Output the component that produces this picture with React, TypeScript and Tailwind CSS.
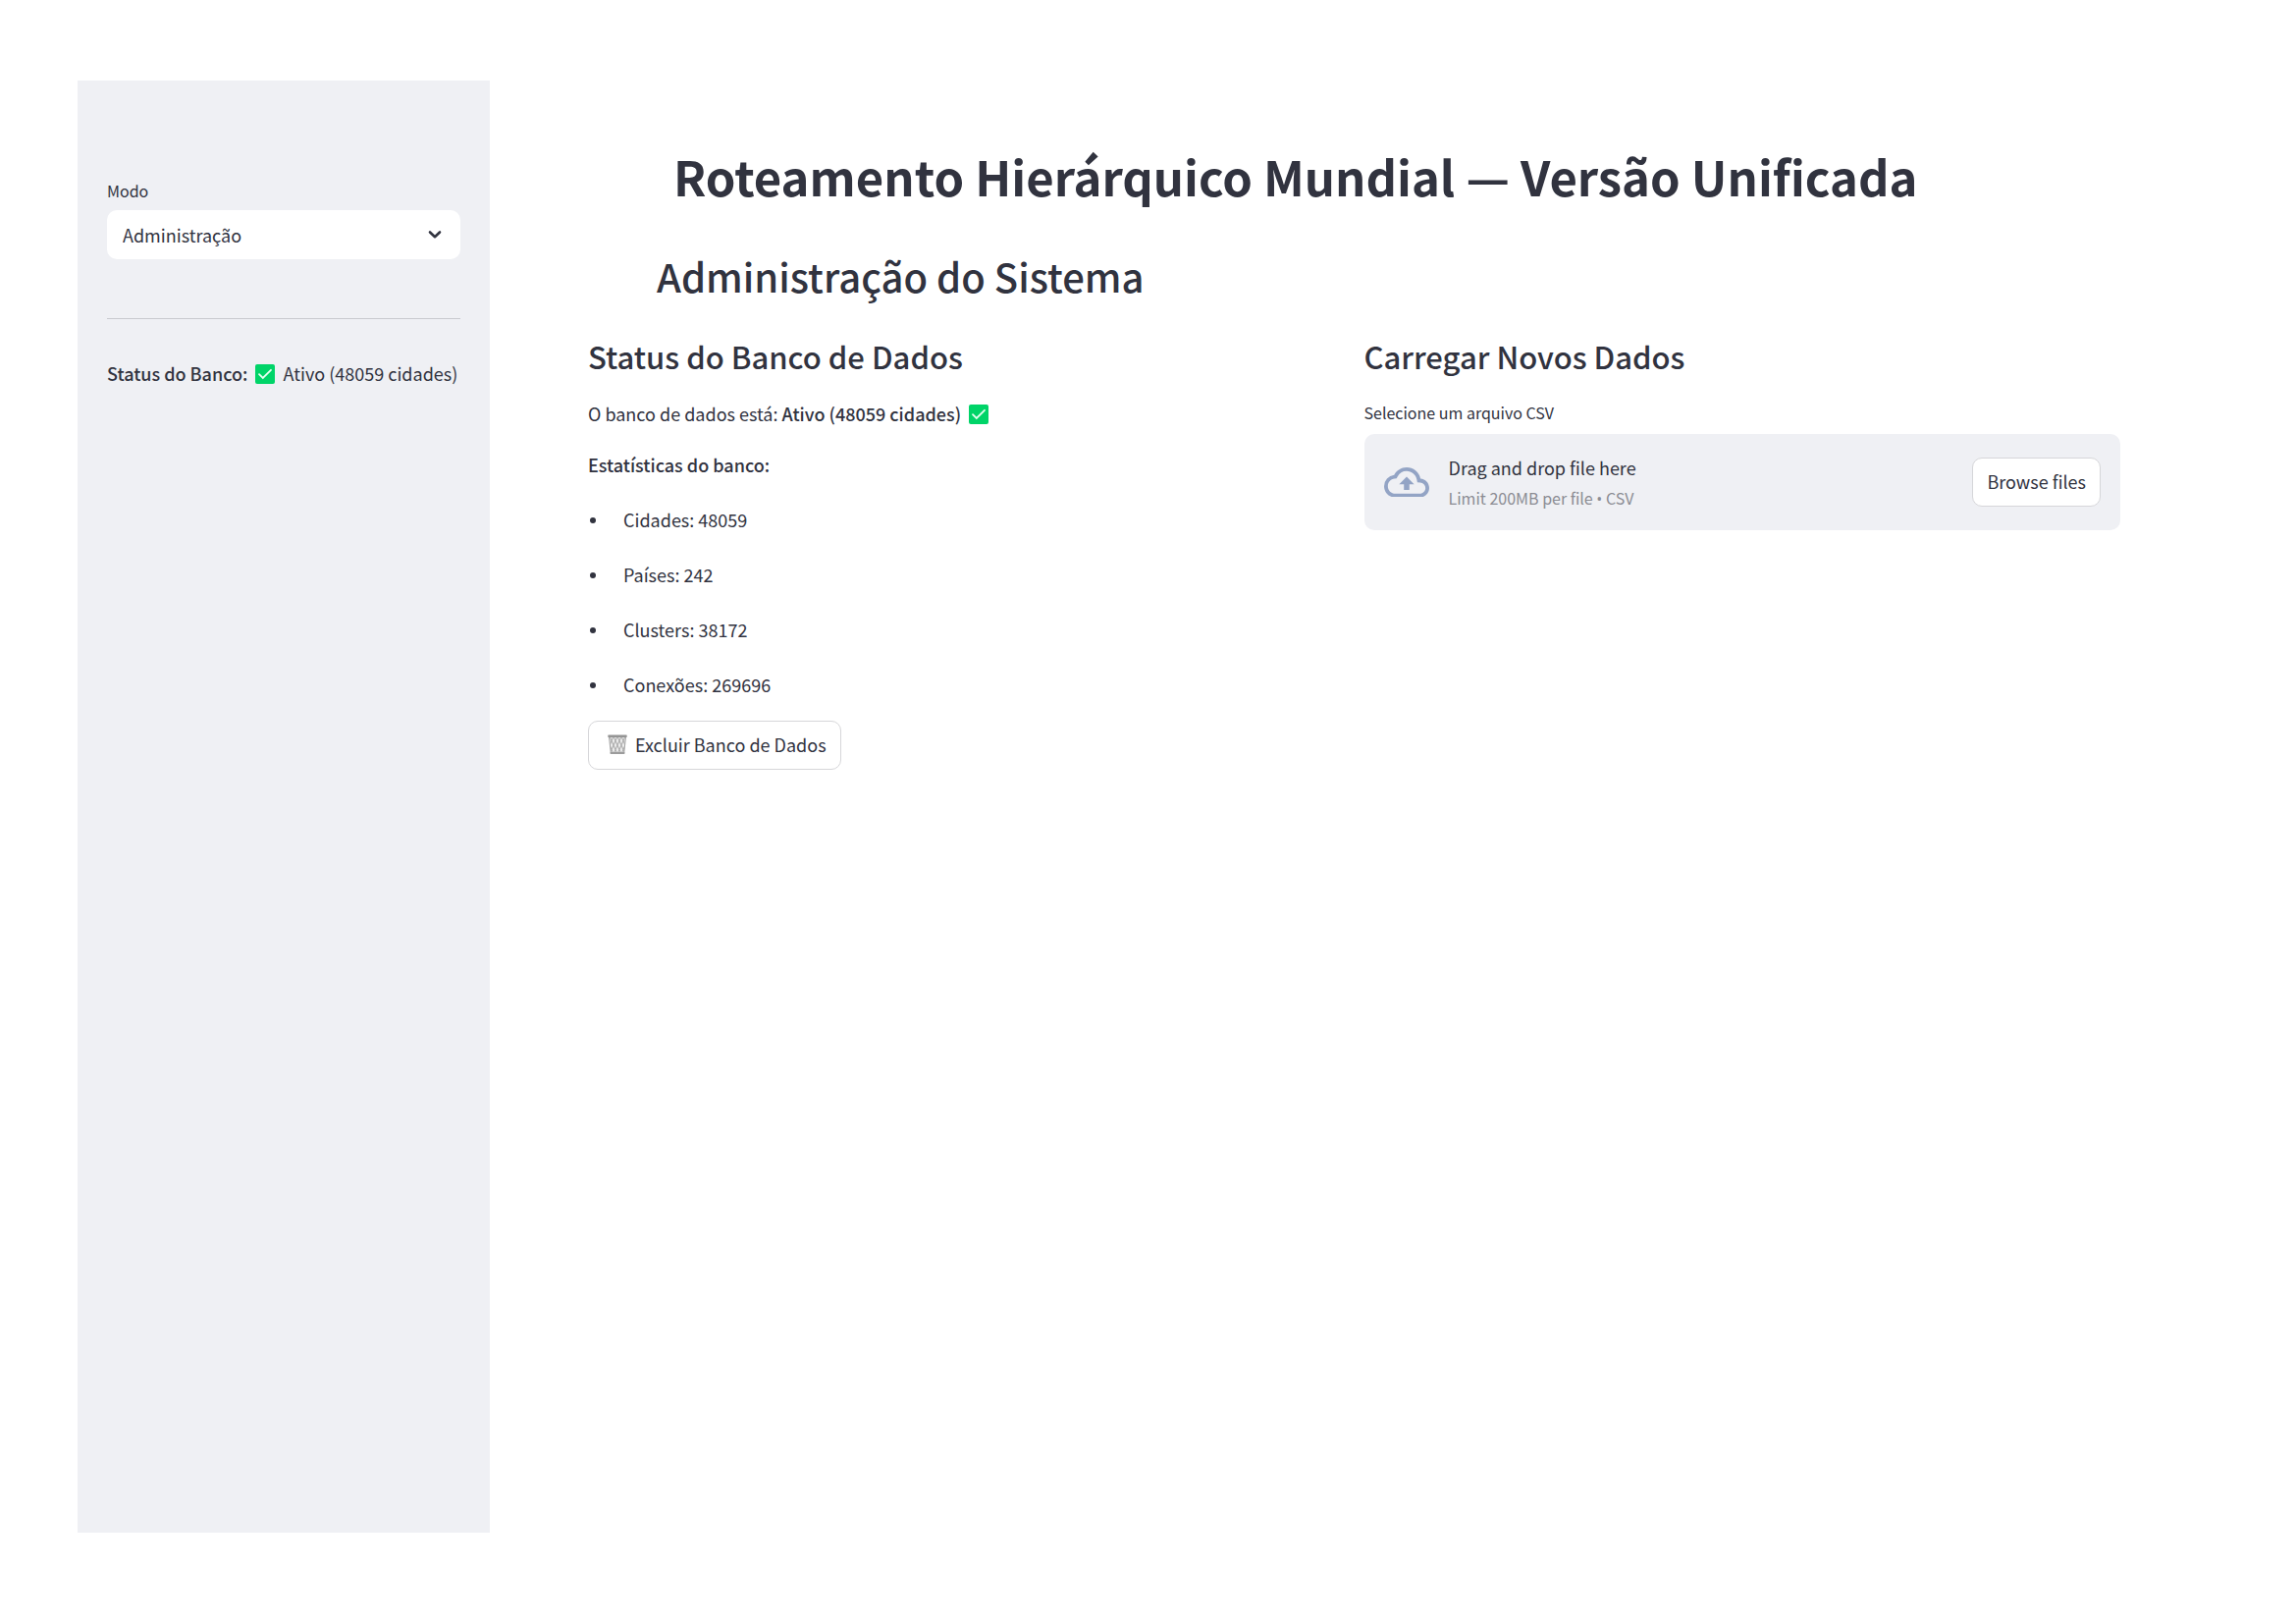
import React, { useId, useRef, useState } from "react";

const stats = [
  { label: "Cidades", value: "48059" },
  { label: "Países", value: "242" },
  { label: "Clusters", value: "38172" },
  { label: "Conexões", value: "269696" },
];

function CheckMark() {
  return (
    <svg viewBox="0 0 20 20" className="mx-2 inline-block size-5 align-[-3px]" role="img" aria-label="Ativo">
      <rect width="20" height="20" rx="2" fill="#00d468" />
      <path d="M4 10.2 7.8 14 16 5.8" fill="none" stroke="#e6fff1" strokeWidth="1.8" strokeLinecap="round" />
    </svg>
  );
}

function TrashIcon() {
  const id = useId();
  return (
    <svg viewBox="0 0 20 20" className="size-5 shrink-0" aria-hidden="true">
      <defs>
        <clipPath id={id}>
          <path d="M1.5 2.5h17L16.5 19h-13z" />
        </clipPath>
      </defs>
      <g clipPath={`url(#${id})`} fill="none" stroke="#b0b0b0" strokeWidth="1.1">
        <rect width="20" height="20" fill="#ececec" stroke="none" />
        <path d="M-6 2l8 18M-2 2l8 18M2 2l8 18M6 2l8 18M10 2l8 18M14 2l8 18" />
        <path d="M6 2l-8 18M10 2 2 20M14 2 6 20M18 2l-8 18M22 2l-8 18M26 2l-8 18" />
      </g>
      <path d="M1.5 2.5 3.3 19M18.5 2.5 16.7 19" stroke="#a3a3a3" strokeWidth="1" />
      <rect x="0.3" y="0.5" width="19.4" height="2.4" rx="0.6" fill="#949494" />
      <rect x="2.6" y="18" width="14.8" height="2" rx="0.5" fill="#9c9c9c" />
    </svg>
  );
}

function CloudUpload() {
  return (
    <svg viewBox="0 0 24 16" className="w-[46px] shrink-0" fill="#93a4c5" aria-hidden="true">
      <path d="M19.35 6.04A7.49 7.49 0 0 0 12 0C9.11 0 6.6 1.64 5.35 4.04A5.994 5.994 0 0 0 0 10c0 3.31 2.69 6 6 6h13c2.76 0 5-2.24 5-5 0-2.64-2.05-4.78-4.65-4.96zM19 14H6c-2.21 0-4-1.79-4-4 0-2.05 1.53-3.76 3.56-3.97l1.07-.11.5-.95A5.469 5.469 0 0 1 12 2c2.62 0 4.88 1.86 5.39 4.43l.3 1.5 1.53.11A2.98 2.98 0 0 1 22 11c0 1.65-1.35 3-3 3zM8 9h2.55v3h2.9V9H16l-4-4z" />
    </svg>
  );
}

function Sidebar() {
  const [mode, setMode] = useState("Administração");
  return (
    <aside className="w-[420px] shrink-0 bg-[#eff0f4] px-[30px] pt-[100px]">
      <label htmlFor="modo" className="mb-2 block text-base/6">
        Modo
      </label>
      <div className="relative">
        <select
          id="modo"
          value={mode}
          onChange={(e) => setMode(e.target.value)}
          className="block h-[50px] w-full appearance-none rounded-[10px] bg-white px-4 text-lg/[30px]"
        >
          <option>Administração</option>
        </select>
        <svg viewBox="0 0 14 10" className="pointer-events-none absolute top-5 right-[19px] w-3.5" aria-hidden="true">
          <path d="m2 2.500 5 4.700 5-4.700" fill="none" stroke="#31333f" strokeWidth="2.600" strokeLinecap="round" strokeLinejoin="round" />
        </svg>
      </div>
      <hr className="mt-[60px] mb-10 border-[#c9cacf]" />
      <p className="text-lg/[30px] whitespace-nowrap">
        <strong className="font-medium">Status do Banco:</strong>
        <CheckMark />
        Ativo (48059 cidades)
      </p>
    </aside>
  );
}

function DatabaseStatus() {
  return (
    <section>
      <h3 className="text-[31px]/[42px] font-medium">Status do Banco de Dados</h3>
      <p className="mt-[22px] text-lg/[30px]">
        O banco de dados está: <strong className="font-medium">Ativo (48059 cidades)</strong>
        <CheckMark />
      </p>
      <p className="mt-[22px] text-lg/[30px] font-medium">Estatísticas do banco:</p>
      <ul className="mt-[26px] mb-[22px] flex flex-col gap-[26px]">
        {stats.map((s) => (
          <li key={s.label} className="flex items-center gap-7 pl-0.5 text-lg/[30px]">
            <span className="mt-0.5 size-1.5 rounded-full bg-[#31333f]" />
            {s.label}: {s.value}
          </li>
        ))}
      </ul>
      <button className="flex h-[50px] items-center gap-2 rounded-[10px] border border-[#d6d6d9] bg-white pr-3.5 pb-0.5 pl-[19px] text-lg/[30px]">
        <TrashIcon />
        Excluir Banco de Dados
      </button>
    </section>
  );
}

function DataUpload() {
  const input = useRef<HTMLInputElement>(null);
  return (
    <section>
      <h3 className="text-[31px]/[42px] font-medium">Carregar Novos Dados</h3>
      <label htmlFor="csv" className="mt-6 mb-2.5 block text-base/6">
        Selecione um arquivo CSV
      </label>
      <div className="flex h-[98px] items-center gap-5 rounded-[10px] bg-[#eff0f4] px-5">
        <CloudUpload />
        <div className="grow">
          <p className="text-lg/8">Drag and drop file here</p>
          <p className="text-base/[30px] text-[#8b8c93]">
            Limit 200MB per file <span className="font-['Open_Sans',sans-serif]">•</span> CSV
          </p>
        </div>
        <input ref={input} id="csv" type="file" accept=".csv" className="hidden" />
        <button
          onClick={() => input.current?.click()}
          className="h-[50px] rounded-[10px] border border-[#d6d6d9] bg-white px-3.5 pb-0.5 text-lg/[30px]"
        >
          Browse files
        </button>
      </div>
    </section>
  );
}

export default function App() {
  return (
    <div className="flex min-h-screen bg-white pt-[82px] pr-[179px] pb-[92px] pl-[79px] font-['Noto_Sans_CJK_SC',sans-serif] text-[#31333f]">
      <Sidebar />
      <main className="grow pt-16 pl-[100px]">
        <h1 className="pl-[87px] text-[49px]/[66px] font-bold">Roteamento Hierárquico Mundial — Versão Unificada</h1>
        <h2 className="mt-[42px] mb-[34px] pl-[70px] text-[40px]/[54px] font-medium">Administração do Sistema</h2>
        <div className="grid grid-cols-2 gap-5">
          <DatabaseStatus />
          <DataUpload />
        </div>
      </main>
    </div>
  );
}
